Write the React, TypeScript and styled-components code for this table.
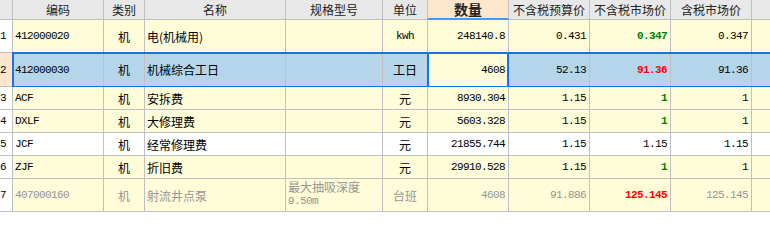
import React from "react";
import styled, { createGlobalStyle, css } from "styled-components";

const GlobalStyle = createGlobalStyle`
  html, body {
    margin: 0;
    padding: 0;
    background: #ffffff;
    overflow: hidden;
  }
`;

const COLS = "13px 91px 41px 141px 97px 45px 81px 81px 81px 81px 60px";
const LINE = "#c0c0c0";
const YELLOW = "#fffcd9";
const SELECTED = "#b4d5ea";
const PEACH = "#fde6cc";
const BLUE = "#1a6ff0";
const CJK = `"Noto Sans CJK SC", "Noto Sans", sans-serif`;
const MONO = `"Liberation Mono", "DejaVu Sans Mono", monospace`;

type Align = "left" | "center" | "right";
type Tone = "normal" | "green" | "red" | "grey";

interface RowData {
  n: number;
  code: string;
  name: string;
  spec?: string[];
  unit: string;
  unitMono?: boolean;
  qty: string;
  budget: string;
  market: string;
  marketTone: Tone;
  tax: string;
  bg: string;
  height: number;
  grey?: boolean;
  selected?: boolean;
}

const rows: RowData[] = [
  { n: 1, code: "412000020", name: "电(机械用)", unit: "kwh", unitMono: true, qty: "248140.8", budget: "0.431", market: "0.347", marketTone: "green", tax: "0.347", bg: YELLOW, height: 33 },
  { n: 2, code: "412000030", name: "机械综合工日", unit: "工日", qty: "4608", budget: "52.13", market: "91.36", marketTone: "red", tax: "91.36", bg: SELECTED, height: 34, selected: true },
  { n: 3, code: "ACF", name: "安拆费", unit: "元", qty: "8930.304", budget: "1.15", market: "1", marketTone: "green", tax: "1", bg: YELLOW, height: 23 },
  { n: 4, code: "DXLF", name: "大修理费", unit: "元", qty: "5603.328", budget: "1.15", market: "1", marketTone: "green", tax: "1", bg: YELLOW, height: 23 },
  { n: 5, code: "JCF", name: "经常修理费", unit: "元", qty: "21855.744", budget: "1.15", market: "1.15", marketTone: "normal", tax: "1.15", bg: "#ffffff", height: 23 },
  { n: 6, code: "ZJF", name: "折旧费", unit: "元", qty: "29910.528", budget: "1.15", market: "1", marketTone: "green", tax: "1", bg: YELLOW, height: 23 },
  { n: 7, code: "407000160", name: "射流井点泵", spec: ["最大抽吸深度", "9.50m"], unit: "台班", qty: "4608", budget: "91.886", market: "125.145", marketTone: "red", tax: "125.145", bg: YELLOW, height: 33, grey: true },
];

const toneColor = (tone: Tone) =>
  tone === "green" ? "#008000" : tone === "red" ? "#ff0000" : tone === "grey" ? "#969696" : "#000000";

const Sheet = styled.div`
  width: 770px;
  overflow: hidden;
`;

const Row = styled.div<{ $height: number }>`
  position: relative;
  display: grid;
  grid-template-columns: ${COLS};
  width: 812px;
  height: ${(p) => p.$height}px;
`;

const Cell = styled.div<{
  $align?: Align;
  $bg?: string;
  $mono?: boolean;
  $tone?: Tone;
  $bold?: boolean;
}>`
  position: relative;
  box-sizing: border-box;
  display: flex;
  align-items: center;
  justify-content: ${(p) => (p.$align === "right" ? "flex-end" : p.$align === "center" ? "center" : "flex-start")};
  padding: 0 ${(p) => (p.$align === "right" ? "3px" : "0")} 0 ${(p) => (p.$align === "left" ? "2px" : "0")};
  border-right: 1px solid ${LINE};
  border-bottom: 1px solid ${LINE};
  background: ${(p) => p.$bg || "transparent"};
  color: ${(p) => toneColor(p.$tone || "normal")};
  font-weight: ${(p) => (p.$bold ? 700 : 400)};
  white-space: nowrap;
  overflow: hidden;
  ${(p) =>
    p.$mono
      ? css`
          font-family: ${MONO};
          font-size: 11px;
          letter-spacing: -0.6px;
        `
      : css`
          font-family: ${CJK};
          font-size: 12px;
        `}
`;

const HeadCell = styled.div<{ $accent?: boolean }>`
  box-sizing: border-box;
  display: flex;
  align-items: center;
  justify-content: center;
  border-right: 1px solid ${LINE};
  border-bottom: ${(p) => (p.$accent ? `2px solid #4a98f2` : `1px solid ${LINE}`)};
  background: ${(p) => (p.$accent ? PEACH : "#e8e8e8")};
  color: #222222;
  font-family: ${CJK};
  font-size: ${(p) => (p.$accent ? "14px" : "12px")};
  font-weight: ${(p) => (p.$accent ? 700 : 400)};
  white-space: nowrap;
  overflow: hidden;
`;

const RowNum = styled(Cell)`
  justify-content: flex-start;
  padding: 0;
  color: #000000;
`;

const SpecCell = styled(Cell)`
  flex-direction: column;
  align-items: flex-start;
  justify-content: flex-start;
  padding-top: 1px;
  line-height: 14px;
`;

const SpecNum = styled.span`
  font-family: ${MONO};
  font-size: 11px;
  letter-spacing: -0.6px;
`;

const RowSelection = styled.div`
  position: absolute;
  left: 12px;
  right: 0;
  top: -1px;
  bottom: -1px;
  border-top: 2px solid ${BLUE};
  border-bottom: 2px solid ${BLUE};
  border-left: 2px solid ${BLUE};
  pointer-events: none;
`;

const QtyFocus = styled.div`
  position: absolute;
  left: 427px;
  width: 82px;
  top: -1px;
  bottom: -1px;
  border: 2px solid ${BLUE};
  box-sizing: border-box;
  pointer-events: none;
`;

const headers = ["", "编码", "类别", "名称", "规格型号", "单位", "数量", "不含税预算价", "不含税市场价", "含税市场价", ""];

const DataRow = ({ r }: { r: RowData }) => {
  const base: Tone = r.grey ? "grey" : "normal";
  return (
    <Row $height={r.height}>
      <RowNum $bg={r.selected ? PEACH : "#ffffff"} $mono>
        {r.n}
      </RowNum>
      <Cell $bg={r.bg} $align="left" $mono $tone={base}>
        {r.code}
      </Cell>
      <Cell $bg={r.bg} $align="center" $tone={base}>
        机
      </Cell>
      <Cell $bg={r.bg} $align="left" $tone={base}>
        {r.name}
      </Cell>
      {r.spec ? (
        <SpecCell $bg={r.bg} $align="left" $tone={base}>
          <span>{r.spec[0]}</span>
          <SpecNum>{r.spec[1]}</SpecNum>
        </SpecCell>
      ) : (
        <Cell $bg={r.bg} />
      )}
      <Cell $bg={r.bg} $align="center" $mono={r.unitMono} $tone={base}>
        {r.unit}
      </Cell>
      <Cell $bg={r.selected ? YELLOW : r.bg} $align="right" $mono $tone={base}>
        {r.qty}
      </Cell>
      <Cell $bg={r.bg} $align="right" $mono $tone={base}>
        {r.budget}
      </Cell>
      <Cell
        $bg={r.bg}
        $align="right"
        $mono
        $tone={r.marketTone === "normal" ? base : r.marketTone}
        $bold={r.marketTone !== "normal"}
      >
        {r.market}
      </Cell>
      <Cell $bg={r.bg} $align="right" $mono $tone={base}>
        {r.tax}
      </Cell>
      <Cell $bg={r.bg} />
      {r.selected && <RowSelection />}
      {r.selected && <QtyFocus />}
    </Row>
  );
};

export default function App() {
  return (
    <>
      <GlobalStyle />
      <Sheet>
        <Row $height={20}>
          {headers.map((h, i) => (
            <HeadCell key={i} $accent={h === "数量"}>
              {h}
            </HeadCell>
          ))}
        </Row>
        {rows.map((r) => (
          <DataRow key={r.n} r={r} />
        ))}
      </Sheet>
    </>
  );
}
